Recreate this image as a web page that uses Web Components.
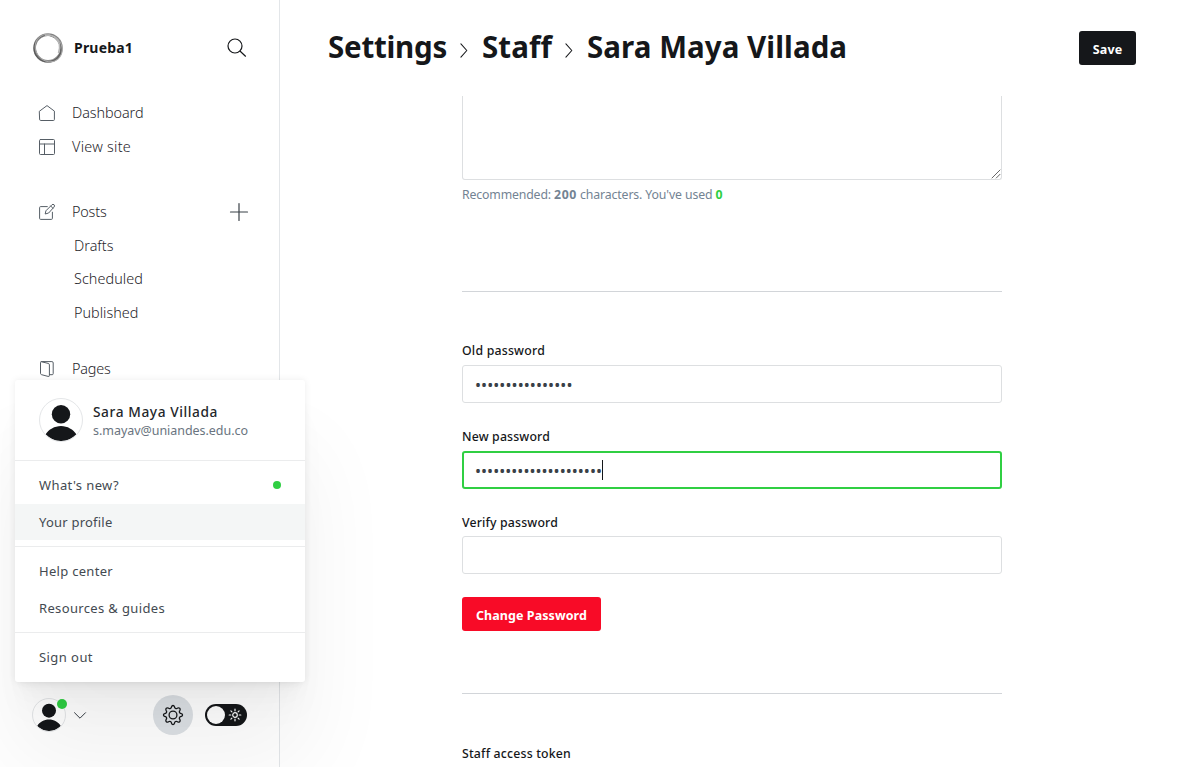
<!DOCTYPE html>
<html lang="en">
<head>
<meta charset="utf-8">
<title>Settings - Staff</title>
<style>
html,body{margin:0;height:100%;overflow:hidden;background:#fff}
body{font-family:"Noto Sans","Open Sans",sans-serif;color:#15171a}
</style>
</head>
<body>
<admin-app></admin-app>
<script>
const define=(name,html,setup)=>{
  customElements.define(name,class extends HTMLElement{
    connectedCallback(){
      if(this.shadowRoot)return;
      const t=document.createElement('template');
      t.innerHTML=html;
      this.attachShadow({mode:'open'}).append(t.content.cloneNode(true));
      if(setup)setup(this,this.shadowRoot);
    }
  });
};

/* Single line of text, tracked so that it fills the width given in "w". */
define('fit-text','<style>:host{display:inline-block;white-space:pre;flex:none}</style><slot></slot>',el=>{
  const w=parseFloat(el.getAttribute('w'));
  const n=[...el.textContent].length;
  if(!w||!n)return;
  const natural=el.getBoundingClientRect().width;
  el.style.letterSpacing=((w-natural)/n).toFixed(3)+'px';
});

const icons={
  home:['0 0 16 16','<path d="M.6 6.1 8 .6l7.400 5.500v8.400a1 1 0 0 1-1 1H1.600a1 1 0 0 1-1-1z"/>'],
  layout:['0 0 16 16','<rect x=".5" y=".5" width="15" height="15" rx="1"/><path d="M.5 5h15M5.500 5v10.500"/>'],
  edit:['0 0 16 16','<path d="M8.300 2.600H1.600a1 1 0 0 0-1 1v10.800a1 1 0 0 0 1 1h10.800a1 1 0 0 0 1-1V8.200"/><path d="m9.300 9.100-3.100.9.700-3.200 6-6a1.450 1.450 0 0 1 2.200 2.200zM11.700 2l2.200 2.200"/>'],
  pages:['0 0 16 16','<path d="M4.500.6H12.900a1.300 1.300 0 0 1 1.300 1.300v10.800a1 1 0 0 1-1 1h-2.700"/><path d="m2.300.7 6.900 1.700a1.500 1.500 0 0 1 1.200 1.500v10.500a1 1 0 0 1-1.300 1l-6.500-1.700a1.500 1.500 0 0 1-1.100-1.400V1.500c0-.6.300-.9.900-.9h2.500"/>'],
  plus:['0 0 18 18','<path d="M9 .5v17M.5 9h17"/>'],
  search:['0 0 20 20','<circle cx="8" cy="8" r="7"/><path d="m13.200 13.200 5.300 5"/>'],
  down:['0 0 12 7','<path d="m.5.7 5.500 5.500L11.500.7"/>'],
  right:['0 0 8 16','<path d="m.7.900 6.300 7.100-6.300 7.100"/>'],
  gear:['0 0 20 20','<circle cx="10" cy="10" r="3.900"/><path d="M8.600 1.600c.4-1.500 2.400-1.500 2.800 0l.3.900c.3.900 1.300 1.400 2.200 1l.9-.5c1.400-.7 2.900.8 2.200 2.200l-.5.900c-.4.900.1 1.900 1 2.200l.9.300c1.500.4 1.500 2.400 0 2.800l-.9.300c-.9.300-1.400 1.300-1 2.200l.5.900c.7 1.400-.8 2.900-2.200 2.200l-.9-.5c-.9-.4-1.900.1-2.200 1l-.3.900c-.4 1.500-2.400 1.500-2.800 0l-.3-.9c-.3-.9-1.300-1.400-2.200-1l-.9.500c-1.400.7-2.900-.8-2.200-2.200l.5-.9c.4-.9-.1-1.900-1-2.200l-.9-.3c-1.500-.4-1.500-2.400 0-2.800l.9-.3c.9-.3 1.400-1.300 1-2.200l-.5-.9c-.7-1.400.8-2.900 2.200-2.200l.9.500c.9.400 1.900-.1 2.200-1z"/>'],
  sun:['0 0 12 12','<circle cx="6" cy="6" r="2.300"/><path d="M6 .2v1.600M6 10.200v1.600M.2 6h1.600M10.200 6h1.600M1.900 1.900l1 1M9.100 9.100l1 1M1.900 10.100l1-1M9.100 2.900l1-1"/>'],
  grip:['0 0 8 8','<path d="M0 8 8 0M4.300 8 8 4.300"/>']
};
define('ui-icon','<style>:host{display:block;flex:none}svg{display:block;width:100%;height:100%;overflow:visible;fill:none;stroke:currentColor;stroke-width:var(--stroke,1);stroke-linecap:round;stroke-linejoin:round}</style><svg></svg>',(el,r)=>{
  const [box,body]=icons[el.getAttribute('name')];
  const s=r.querySelector('svg');
  s.setAttribute('viewBox',box);
  s.innerHTML=body;
});

define('user-avatar',`<style>
:host{display:block;box-sizing:border-box;border:1px solid #e4e6e8;border-radius:50%;background:#fff;overflow:hidden;flex:none}
svg{display:block;width:100%;height:100%}
</style><svg viewBox="0 0 42 42"><g fill="#15171a"><circle cx="21" cy="15.300" r="9.200"/><path d="M5.500 35.500C8.600 30.500 14.600 27 21 27s12.400 3.500 15.500 8.500A21 21 0 0 1 21 42 21 21 0 0 1 5.500 35.500z"/></g></svg>`);

define('site-logo',`<style>:host{display:block;width:30px;height:30px;flex:none}svg{display:block;overflow:visible}</style>
<svg width="30" height="30" viewBox="0 0 30 30" fill="none">
<circle cx="15" cy="15" r="13.400" stroke="#8a8a8a" stroke-width="2.800"/>
<circle cx="14.700" cy="15.200" r="13.600" stroke="#555" stroke-width="1.100"/>
<ellipse cx="14.600" cy="15.300" rx="12.400" ry="13.800" stroke="#666" stroke-width=".8" transform="rotate(-35 15 15)"/>
<ellipse cx="15.500" cy="14.500" rx="14.400" ry="12.800" stroke="#aaa" stroke-width="1" transform="rotate(50 15 15)"/>
<path d="M21 3.500c5 3.500 7 9.500 4.500 16.500M12 2.500c6-1 11 2 13.500 5.500" stroke="#b5b5b5" stroke-width="1.600"/>
</svg>`);

define('nav-item',`<style>
:host{display:flex;align-items:center;height:34px;padding-left:39px;padding-right:31px;font-size:14.400px;line-height:20px;font-weight:300;color:#1f252b}
ui-icon{width:16px;height:16px;margin-right:17px;color:#565e66}
.end{margin-left:auto}
:host([sub]){padding-left:74px;height:33.5px}
</style><slot></slot><div class="end"><slot name="end"></slot></div>`,(el,r)=>{
  const n=el.getAttribute('icon');
  if(n){const i=document.createElement('ui-icon');i.setAttribute('name',n);r.querySelector('slot').before(i);}
});

define('app-sidebar',`<style>
:host{display:flex;flex-direction:column;box-sizing:border-box;width:280px;height:767px;border-right:1px solid #e3e6e9;background:#fff}
header{display:flex;align-items:center;height:96px;padding:0 33px;box-sizing:border-box;font-size:14px;font-weight:700}
header fit-text{margin-left:11px;margin-bottom:2px}
.search{width:20px;height:20px;margin-left:auto;color:#15171a;--stroke:1.2;margin-right:-1px}
nav{flex:1;overflow:hidden}
.group{margin-bottom:31px}
.group.b{margin-bottom:22px}
.plus{width:18px;height:18px;color:#394047;--stroke:1.2}
footer{display:flex;align-items:center;height:104px;padding:0 32px 0 32px}
.who{position:relative}
.who user-avatar{width:34px;height:34px}
.dot{position:absolute;left:25px;top:1px;width:10px;height:10px;border-radius:50%;background:#30cf43}
.down{width:12px;height:7px;margin-left:8px;color:#394047}
.gear{display:grid;place-items:center;width:40px;height:40px;margin-left:67px;border-radius:50%;background:#dde1e5}
.gear ui-icon{width:20px;height:20px;--stroke:1.3}
.toggle{display:flex;align-items:center;justify-content:space-between;box-sizing:border-box;width:42px;height:22px;margin-left:12px;padding:0 6px 0 2px;border-radius:11px;background:#15171a;color:#fff}
.toggle i{width:18px;height:18px;border-radius:50%;background:#fff}
.toggle ui-icon{width:12px;height:12px;--stroke:1.2}
</style>
<header><site-logo></site-logo><fit-text w="59">Prueba1</fit-text><ui-icon class="search" name="search"></ui-icon></header>
<nav>
<div class="group"><nav-item icon="home"><fit-text w="71.500">Dashboard</fit-text></nav-item><nav-item icon="layout"><fit-text w="59">View site</fit-text></nav-item></div>
<div class="group b"><nav-item icon="edit"><fit-text w="34.500">Posts</fit-text><ui-icon class="plus" slot="end" name="plus"></ui-icon></nav-item>
<nav-item sub><fit-text w="39.500">Drafts</fit-text></nav-item><nav-item sub><fit-text w="69">Scheduled</fit-text></nav-item><nav-item sub><fit-text w="64.500">Published</fit-text></nav-item></div>
<nav-item icon="pages"><fit-text w="38.500">Pages</fit-text></nav-item>
</nav>
<footer><div class="who"><user-avatar></user-avatar><span class="dot"></span></div><ui-icon class="down" name="down"></ui-icon><div class="gear"><ui-icon name="gear"></ui-icon></div><div class="toggle"><i></i><ui-icon name="sun"></ui-icon></div></footer>`);

define('menu-row',`<style>
:host{display:flex;align-items:center;justify-content:space-between;height:36px;padding:0 24px;font-size:13px;font-weight:400;color:#434a51}
:host([active]){background:#f4f6f6}
:host([fresh])::after{content:"";width:8px;height:8px;border-radius:50%;background:#30cf43}
</style><slot></slot>`);

define('menu-group',`<style>:host{display:flex;flex-direction:column;gap:1px;padding:6px 0;border-top:1px solid #ebeced}:host(:last-child){padding-bottom:7px}</style><slot></slot>`);

define('user-menu',`<style>
:host{display:block;width:290px;background:#fff;border-radius:3px;box-shadow:0 0 7px rgba(0,0,0,.08),0 2.100px 2.200px -5px rgba(0,0,0,.011),0 5.100px 5.300px -5px rgba(0,0,0,.016),0 9.500px 10px -5px rgba(0,0,0,.02),0 17px 17.900px -5px rgba(0,0,0,.024),0 31.800px 33.400px -5px rgba(0,0,0,.029),0 76px 90px 4px rgba(0,0,0,.055)}
header{display:flex;align-items:center;height:80px;box-sizing:border-box;padding:0 24px}
user-avatar{width:44px;height:44px;margin-right:10px}
.id{display:flex;flex-direction:column;align-items:flex-start;padding-top:2px}
.name{font-size:13.700px;line-height:20px;font-weight:500;color:#23262a}
.mail{font-size:12.500px;line-height:18px;color:#6a7480}
</style>
<header><user-avatar></user-avatar><div class="id"><fit-text class="name" w="125">Sara Maya Villada</fit-text><fit-text class="mail" w="155">s.mayav@uniandes.edu.co</fit-text></div></header>
<menu-group><menu-row fresh><fit-text w="80">What's new?</fit-text></menu-row><menu-row active><fit-text w="73.500">Your profile</fit-text></menu-row></menu-group>
<menu-group><menu-row><fit-text w="74">Help center</fit-text></menu-row><menu-row><fit-text w="126">Resources &amp; guides</fit-text></menu-row></menu-group>
<menu-group><menu-row><fit-text w="54">Sign out</fit-text></menu-row></menu-group>`);

define('ui-button',`<style>
:host{display:flex;align-items:center;justify-content:center;box-sizing:border-box;height:34px;border-radius:3px;color:#fff;background:#15171a;font-size:12.500px;font-weight:700;line-height:18px;padding-top:3px}
:host([danger]){background:#f80b27}
</style><slot></slot>`);

define('form-field',`<style>
:host{display:block;height:86px}
.label{box-sizing:border-box;padding-top:1px;font-size:12.300px;font-weight:500;line-height:18px;height:24px}
.box{display:flex;align-items:center;box-sizing:border-box;height:38px;border:1px solid #dddfe1;border-radius:3px;padding:2px 0 0 12px;font-size:16px;line-height:20px;color:#394047}
:host([focused]) .box{border:2px solid #30cf43;padding-left:11px}
:host([focused]) .box::after{content:"";width:1px;height:20px;margin-top:-2px;background:#15171a}
</style><div class="label"><slot name="label"></slot></div><div class="box"><slot></slot></div>`);

define('page-header',`<style>
:host{display:flex;align-items:center;box-sizing:border-box;height:96px;padding:0 48px;font-size:29.500px;font-weight:700;line-height:40px}
fit-text{margin-bottom:2px}
ui-icon{width:8px;height:15px;margin:4px 14px 0 13px;--stroke:1.1}
ui-button{width:57px;margin-left:auto}
ui-button fit-text{margin:0}
</style><fit-text w="119">Settings</fit-text><ui-icon name="right"></ui-icon><fit-text w="70">Staff</fit-text><ui-icon name="right"></ui-icon><fit-text w="260">Sara Maya Villada</fit-text><ui-button><fit-text w="29.500">Save</fit-text></ui-button>`);

define('staff-form',`<style>
:host{display:block;width:540px;margin-left:182px}
.bio{display:flex;align-items:flex-end;justify-content:flex-end;box-sizing:border-box;height:84px;border:1px solid #dddfe1;border-top:0;border-radius:0 0 3px 3px;padding:1px}
.bio ui-icon{width:8px;height:8px;color:#555;--stroke:.9}
.hint{display:flex;height:111px;padding-top:6px;box-sizing:border-box;font-size:12.300px;line-height:17px;color:#738393}
b{font-weight:700}
.hint b.n{color:#30cf43}
.rule{height:1px;background:#d2d5d9}
.pw{height:401px;padding-top:49px;box-sizing:border-box}
.last{height:84px;margin-top:-1px}
ui-button{width:139px}
.token{padding-top:51px;font-size:12.300px;font-weight:500;line-height:18px}
</style>
<div class="bio"><ui-icon name="grip"></ui-icon></div>
<div class="hint"><fit-text w="92">Recommended: </fit-text><fit-text w="23"><b>200</b></fit-text><fit-text w="138.500"> characters. You've used </fit-text><fit-text w="8"><b class="n">0</b></fit-text></div>
<div class="rule"></div>
<div class="pw">
<form-field><fit-text slot="label" w="83">Old password</fit-text><fit-text w="97.500">••••••••••••••••</fit-text></form-field>
<form-field focused><fit-text slot="label" w="88">New password</fit-text><fit-text w="127">•••••••••••••••••••••</fit-text></form-field>
<form-field class="last"><fit-text slot="label" w="96" style="margin-top:1px">Verify password</fit-text></form-field>
<ui-button danger style="margin-top:1px"><fit-text w="111">Change Password</fit-text></ui-button>
</div>
<div class="rule"></div>
<div class="token"><fit-text w="109">Staff access token</fit-text></div>`);

define('admin-app',`<style>
:host{display:grid;grid-template-columns:280px 1fr;width:100vw;height:100vh;overflow:hidden;position:relative}
main{min-width:0;overflow:hidden}
user-menu{position:absolute;left:15px;top:380px}
</style><app-sidebar></app-sidebar><main><page-header></page-header><staff-form></staff-form></main><user-menu></user-menu>`);
</script>
</body>
</html>
